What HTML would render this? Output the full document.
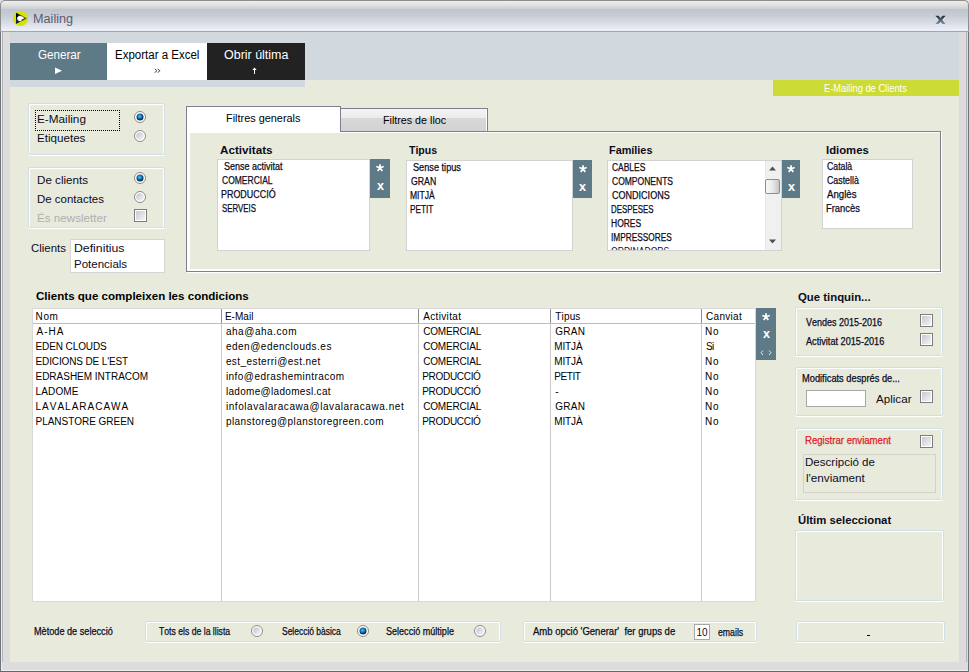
<!DOCTYPE html>
<html><head><meta charset="utf-8"><style>
html,body{margin:0;padding:0;}
body{width:969px;height:672px;overflow:hidden;position:relative;font-family:"Liberation Sans",sans-serif;background:#dcdcdc;font-kerning:none;}
.a{position:absolute;}
.t{white-space:pre;}
</style></head><body>
<div class="a" style="left:0px;top:0px;width:969px;height:672px;background:#dfe3ea;"></div>
<div class="a" style="left:0px;top:20px;width:969px;height:652px;background:#dcdcdc;"></div>
<div class="a" style="left:0px;top:0px;width:969px;height:32px;background:linear-gradient(#eeeeee 0px,#e4e4e4 3px,#d0d1d3 7.5px,#bdc5cd 8px,#c6ccd4 14px,#d9dde5 22px,#eceff7 29px);border:1px solid #8e8e8e;border-bottom:none;border-radius:5px 5px 0 0;box-sizing:border-box;"></div>
<div class="a" style="left:0px;top:31px;width:969px;height:1px;background:#a4a6aa;"></div>
<div class="a" style="left:0px;top:32px;width:1px;height:640px;background:#6e747c;"></div>
<div class="a" style="left:968px;top:32px;width:1px;height:640px;background:#6e747c;"></div>
<div class="a" style="left:0px;top:671px;width:969px;height:1px;background:#60666e;"></div>
<div class="a" style="left:1px;top:32px;width:1px;height:639px;background:#eeeeee;"></div>
<div class="a" style="left:2px;top:32px;width:1px;height:630px;background:#b4b4b4;"></div>
<div class="a" style="left:966px;top:32px;width:1px;height:630px;background:#b4b4b4;"></div>
<div class="a" style="left:1px;top:670px;width:967px;height:1px;background:#f0f0f0;"></div>
<div class="a" style="left:10px;top:32px;width:949px;height:630px;background:#e8eadc;"></div>
<div class="a" style="left:10px;top:32px;width:949px;height:48px;background:#d1d9df;"></div>
<div class="a" style="left:10px;top:80px;width:295px;height:7px;background:#d1d9df;"></div>
<div class="a" style="left:10px;top:43px;width:97px;height:37px;background:#5f7a87;"></div>
<div class="a" style="left:107px;top:43px;width:100px;height:37px;background:#ffffff;"></div>
<div class="a" style="left:207px;top:43px;width:98px;height:37px;background:#222222;"></div>
<div class="a t" style="left:37.70px;top:49px;font-size:12px;line-height:12px;color:#ffffff;transform:scaleX(0.9705);transform-origin:0 0;">Generar</div>
<div class="a t" style="left:114.74px;top:49px;font-size:12px;line-height:12px;color:#000;transform:scaleX(0.9586);transform-origin:0 0;">Exportar a Excel</div>
<div class="a t" style="left:223.60px;top:49px;font-size:12px;line-height:12px;color:#ffffff;transform:scaleX(1.0387);transform-origin:0 0;">Obrir última</div>
<svg class="a" style="left:55px;top:67px" width="8" height="8"><path d="M0 0.5 L7 3.8 L0 7 Z" fill="#fff"/></svg>
<svg class="a" style="left:154px;top:68px" width="7" height="6"><path d="M0.8 0.8 L2.8 2.7 L0.8 4.7 M3.8 0.8 L5.8 2.7 L3.8 4.7" stroke="#201030" stroke-width="0.9" fill="none"/></svg>
<svg class="a" style="left:252px;top:67px" width="5" height="7"><path d="M2.5 0.5 L0.3 3 L4.7 3 Z M2 3 L3 3 L3 7 L2 7 Z" fill="#fff"/></svg>
<div class="a" style="left:773px;top:80px;width:186px;height:16px;background:#cddb36;"></div>
<div class="a t" style="left:824.27px;top:84px;font-size:10px;line-height:10px;color:#ffffff;transform:scaleX(0.9318);transform-origin:0 0;">E-Mailing de Clients</div>
<svg class="a" style="left:12px;top:10px" width="18" height="18" viewBox="0 0 18 18"><defs><linearGradient id="tg" x1="0" y1="0" x2="1" y2="0"><stop offset="0.55" stop-color="#000" stop-opacity="1"/><stop offset="0.75" stop-color="#283048" stop-opacity="0.8"/><stop offset="1" stop-color="#2a60b0" stop-opacity="0.6"/></linearGradient></defs><circle cx="8.5" cy="8.5" r="7.6" fill="#d6e200"/><path d="M4 2.7 L15.2 8.6 L4 13.8 Z" fill="url(#tg)"/><path d="M4 9 L10 9 L4 13.8 Z" fill="#0b2452"/><path d="M5.2 7 L6.2 7 L6.2 5.8 L8.8 5.8 L8.8 6.6 L10.2 5.9 L11 7.2 L11.8 7.6 L11.8 9 L9.6 9.6 L9.6 11.2 L6.4 11.2 L6.4 10 L5.2 9.8 Z" fill="#fff"/></svg>
<div class="a t" style="left:32.95px;top:13px;font-size:12px;line-height:12px;color:#5c5a70;transform:scaleX(1.0541);transform-origin:0 0;">Mailing</div>
<svg class="a" style="left:935px;top:15px" width="12" height="12"><defs><linearGradient id="xg" x1="0" y1="0" x2="0" y2="1"><stop offset="0" stop-color="#2c3036"/><stop offset="0.45" stop-color="#4a5a6c"/><stop offset="1" stop-color="#7f98b2"/></linearGradient></defs><path d="M0.3 1.8 L3.6 1.8 L10.8 10.3 L7.4 10.3 Z M7.4 1.8 L10.8 1.8 L3.6 10.3 L0.3 10.3 Z" fill="#fff" opacity="0.9"/><path d="M0.3 0.8 L3.6 0.8 L10.8 9.3 L7.4 9.3 Z M7.4 0.8 L10.8 0.8 L3.6 9.3 L0.3 9.3 Z" fill="url(#xg)"/></svg>
<div class="a" style="left:28px;top:103px;width:137px;height:52px;border:1px solid #d3dde5;box-shadow:inset 1px 1px 0 #fff,inset -1px 0 0 #fff,0 1px 0 #fff;border-radius:2px;box-sizing:border-box;"></div>
<div class="a" style="left:35px;top:110px;width:85px;height:21px;border:1px dotted #000;box-sizing:border-box;"></div>
<div class="a t" style="left:36.83px;top:114px;font-size:11px;line-height:11px;color:#0c0c1e;transform:scaleX(1.0667);transform-origin:0 0;">E-Mailing</div>
<div class="a t" style="left:36.84px;top:133px;font-size:11px;line-height:11px;color:#0c0c1e;transform:scaleX(1.0556);transform-origin:0 0;">Etiquetes</div>
<svg class="a" style="left:134px;top:111px" width="12" height="12"><defs><radialGradient id="rg1" cx="45%" cy="40%" r="60%"><stop offset="0" stop-color="#40c8ff"/><stop offset="0.4" stop-color="#1a88cc"/><stop offset="0.8" stop-color="#0a3458"/><stop offset="1" stop-color="#0a2a48"/></radialGradient></defs><circle cx="6" cy="6" r="5.5" fill="#fff" stroke="#8a8a8a" stroke-width="1"/><circle cx="6" cy="6" r="3.5" fill="url(#rg1)"/></svg>
<svg class="a" style="left:134px;top:130px" width="12" height="12"><defs><linearGradient id="ug2" x1="0" y1="0" x2="1" y2="1"><stop offset="0" stop-color="#bfc4cc"/><stop offset="1" stop-color="#f8f8f8"/></linearGradient></defs><circle cx="6" cy="6" r="5.5" fill="#fff" stroke="#8a8a8a" stroke-width="1"/><circle cx="6" cy="6" r="3.8" fill="url(#ug2)"/></svg>
<div class="a" style="left:28px;top:167px;width:137px;height:61px;border:1px solid #d3dde5;box-shadow:inset 1px 1px 0 #fff,inset -1px 0 0 #fff,0 1px 0 #fff;border-radius:2px;box-sizing:border-box;"></div>
<div class="a t" style="left:36.74px;top:175px;font-size:11px;line-height:11px;color:#0c0c1e;transform:scaleX(1.0574);transform-origin:0 0;">De clients</div>
<div class="a t" style="left:36.76px;top:194px;font-size:11px;line-height:11px;color:#0c0c1e;transform:scaleX(1.0429);transform-origin:0 0;">De contactes</div>
<div class="a t" style="left:36.74px;top:213px;font-size:11px;line-height:11px;color:#b0b0b0;transform:scaleX(1.0585);transform-origin:0 0;">És newsletter</div>
<svg class="a" style="left:134px;top:172px" width="12" height="12"><defs><radialGradient id="rg3" cx="45%" cy="40%" r="60%"><stop offset="0" stop-color="#40c8ff"/><stop offset="0.4" stop-color="#1a88cc"/><stop offset="0.8" stop-color="#0a3458"/><stop offset="1" stop-color="#0a2a48"/></radialGradient></defs><circle cx="6" cy="6" r="5.5" fill="#fff" stroke="#8a8a8a" stroke-width="1"/><circle cx="6" cy="6" r="3.5" fill="url(#rg3)"/></svg>
<svg class="a" style="left:134px;top:191px" width="12" height="12"><defs><linearGradient id="ug4" x1="0" y1="0" x2="1" y2="1"><stop offset="0" stop-color="#bfc4cc"/><stop offset="1" stop-color="#f8f8f8"/></linearGradient></defs><circle cx="6" cy="6" r="5.5" fill="#fff" stroke="#8a8a8a" stroke-width="1"/><circle cx="6" cy="6" r="3.8" fill="url(#ug4)"/></svg>
<div class="a" style="left:134px;top:209px;width:13px;height:13px;border:1px solid #7c7c7c;box-sizing:border-box;background:#fff;"></div>
<div class="a" style="left:136px;top:211px;width:9px;height:9px;background:linear-gradient(135deg,#c6cad2,#f4f4f4);"></div>
<div class="a t" style="left:30.90px;top:243px;font-size:11px;line-height:11px;color:#0c0c1e;transform:scaleX(1.0364);transform-origin:0 0;">Clients</div>
<div class="a" style="left:70px;top:239px;width:95px;height:34px;background:#fff;border:1px solid #d6d6d6;box-sizing:border-box;"></div>
<div class="a t" style="left:73.88px;top:243px;font-size:11px;line-height:11px;color:#0c0c1e;transform:scaleX(1.1159);transform-origin:0 0;">Definitius</div>
<div class="a t" style="left:73.95px;top:259px;font-size:11px;line-height:11px;color:#0c0c1e;transform:scaleX(1.046);transform-origin:0 0;">Potencials</div>
<div class="a" style="left:186px;top:131px;width:755px;height:141px;border:1px solid #7c7f8c;background:#fff;box-sizing:border-box;box-shadow:1px 1px 0 #fff;"></div>
<div class="a" style="left:190px;top:133px;width:750px;height:136px;background:#e8eadc;"></div>
<div class="a" style="left:186px;top:106px;width:155px;height:26px;border:1px solid #7c7f8c;border-bottom:none;background:#fff;box-sizing:border-box;"></div>
<div class="a t" style="left:225.71px;top:113px;font-size:11px;line-height:11px;color:#000;transform:scaleX(0.9905);transform-origin:0 0;">Filtres generals</div>
<div class="a" style="left:340px;top:108px;width:148px;height:24px;border:1px solid #7c7f8c;box-sizing:border-box;background:linear-gradient(#f4f4f4,#ececec 41%,#d9d9d9 42%,#d2d2d2);box-shadow:inset -1px 0 0 #fff;"></div>
<div class="a t" style="left:383.23px;top:115px;font-size:11px;line-height:11px;color:#000;transform:scaleX(0.9734);transform-origin:0 0;">Filtres de lloc</div>
<div class="a t" style="left:219.80px;top:145px;font-size:11px;line-height:11px;color:#0c0c1e;font-weight:bold;transform:scaleX(1.062);transform-origin:0 0;">Activitats</div>
<div class="a" style="left:217px;top:159px;width:153px;height:92px;background:#fff;border:1px solid #d2d2d2;box-sizing:border-box;"></div>
<div class="a t" style="left:224.10px;top:162px;font-size:10px;line-height:10px;color:#0c0c1e;transform:scaleX(0.9);transform-origin:0 0;-webkit-text-stroke:0.25px currentColor;">Sense activitat</div>
<div class="a t" style="left:221.90px;top:176px;font-size:10px;line-height:10px;color:#0c0c1e;transform:scaleX(0.85);transform-origin:0 0;-webkit-text-stroke:0.25px currentColor;">COMERCIAL</div>
<div class="a t" style="left:221.01px;top:190px;font-size:10px;line-height:10px;color:#0c0c1e;transform:scaleX(0.8933);transform-origin:0 0;-webkit-text-stroke:0.25px currentColor;">PRODUCCIÓ</div>
<div class="a t" style="left:221.90px;top:204px;font-size:10px;line-height:10px;color:#0c0c1e;transform:scaleX(0.7814);transform-origin:0 0;-webkit-text-stroke:0.25px currentColor;">SERVEIS</div>
<div class="a" style="left:370px;top:159px;width:20px;height:39px;background:#5f7a87;"></div>
<svg class="a" style="left:375.0px;top:162.9px" width="10" height="9"><path d="M5 4.7 L5 1.3 M5 4.7 L8.7 3.5 M5 4.7 L1.3 3.5 M5 4.7 L7.3 7.9 M5 4.7 L2.7 7.9" stroke="#fff" stroke-width="1.7"/></svg>
<div class="a t" style="left:376.80px;top:180px;font-size:12px;line-height:12px;color:#fff;font-weight:bold;transform:scaleX(1.0571);transform-origin:0 0;">x</div>
<div class="a t" style="left:408.90px;top:145px;font-size:11px;line-height:11px;color:#0c0c1e;font-weight:bold;transform:scaleX(0.9586);transform-origin:0 0;">Tipus</div>
<div class="a" style="left:406px;top:160px;width:167px;height:91px;background:#fff;border:1px solid #d2d2d2;box-sizing:border-box;"></div>
<div class="a t" style="left:412.80px;top:163px;font-size:10px;line-height:10px;color:#0c0c1e;transform:scaleX(0.9173);transform-origin:0 0;-webkit-text-stroke:0.25px currentColor;">Sense tipus</div>
<div class="a t" style="left:410.70px;top:177px;font-size:10px;line-height:10px;color:#0c0c1e;transform:scaleX(0.8724);transform-origin:0 0;-webkit-text-stroke:0.25px currentColor;">GRAN</div>
<div class="a t" style="left:409.85px;top:191px;font-size:10px;line-height:10px;color:#0c0c1e;transform:scaleX(0.85);transform-origin:0 0;-webkit-text-stroke:0.25px currentColor;">MITJÀ</div>
<div class="a t" style="left:409.87px;top:205px;font-size:10px;line-height:10px;color:#0c0c1e;transform:scaleX(0.8259);transform-origin:0 0;-webkit-text-stroke:0.25px currentColor;">PETIT</div>
<div class="a" style="left:573px;top:160px;width:19px;height:38px;background:#5f7a87;"></div>
<svg class="a" style="left:577.5px;top:163.9px" width="10" height="9"><path d="M5 4.7 L5 1.3 M5 4.7 L8.7 3.5 M5 4.7 L1.3 3.5 M5 4.7 L7.3 7.9 M5 4.7 L2.7 7.9" stroke="#fff" stroke-width="1.7"/></svg>
<div class="a t" style="left:579.30px;top:181px;font-size:12px;line-height:12px;color:#fff;font-weight:bold;transform:scaleX(1.0571);transform-origin:0 0;">x</div>
<div class="a t" style="left:608.90px;top:145px;font-size:11px;line-height:11px;color:#0c0c1e;font-weight:bold;transform:scaleX(0.9864);transform-origin:0 0;">Famílies</div>
<div class="a" style="left:607px;top:160px;width:175px;height:91px;background:#fff;border:1px solid #d2d2d2;box-sizing:border-box;"></div>
<div class="a t" style="left:611.80px;top:163px;font-size:10px;line-height:10px;color:#0c0c1e;transform:scaleX(0.8436);transform-origin:0 0;-webkit-text-stroke:0.25px currentColor;">CABLES</div>
<div class="a t" style="left:611.80px;top:177px;font-size:10px;line-height:10px;color:#0c0c1e;transform:scaleX(0.8514);transform-origin:0 0;-webkit-text-stroke:0.25px currentColor;">COMPONENTS</div>
<div class="a t" style="left:611.80px;top:191px;font-size:10px;line-height:10px;color:#0c0c1e;transform:scaleX(0.9031);transform-origin:0 0;-webkit-text-stroke:0.25px currentColor;">CONDICIONS</div>
<div class="a t" style="left:611.01px;top:205px;font-size:10px;line-height:10px;color:#0c0c1e;transform:scaleX(0.7887);transform-origin:0 0;-webkit-text-stroke:0.25px currentColor;">DESPESES</div>
<div class="a t" style="left:610.95px;top:219px;font-size:10px;line-height:10px;color:#0c0c1e;transform:scaleX(0.8486);transform-origin:0 0;-webkit-text-stroke:0.25px currentColor;">HORES</div>
<div class="a t" style="left:610.97px;top:233px;font-size:10px;line-height:10px;color:#0c0c1e;transform:scaleX(0.8278);transform-origin:0 0;-webkit-text-stroke:0.25px currentColor;">IMPRESSORES</div>
<div class="a" style="left:608px;top:246px;width:157px;height:4px;overflow:hidden"><div class="a t" style="left:3px;top:0.8px;font-size:10px;line-height:10px;color:#0c0c1e;transform:scaleX(0.86);transform-origin:0 0">ORDINADORS</div></div>
<div class="a" style="left:765px;top:161px;width:16px;height:89px;background:#f0f0f0;border-left:1px solid #e8e8e8;box-sizing:border-box;"></div>
<svg class="a" style="left:769px;top:166px" width="8" height="5"><path d="M0 4.5 L3.5 0.5 L7 4.5 Z" fill="#505050"/></svg>
<svg class="a" style="left:769px;top:239px" width="8" height="5"><path d="M0 0.5 L3.5 4.5 L7 0.5 Z" fill="#505050"/></svg>
<div class="a" style="left:765px;top:179px;width:15px;height:15px;border:1px solid #8e8e8e;border-radius:2px;box-sizing:border-box;background:linear-gradient(90deg,#f8f8f8,#ececec 45%,#c6c6c6);"></div>
<div class="a" style="left:782px;top:160px;width:18px;height:38px;background:#5f7a87;"></div>
<svg class="a" style="left:786.0px;top:163.9px" width="10" height="9"><path d="M5 4.7 L5 1.3 M5 4.7 L8.7 3.5 M5 4.7 L1.3 3.5 M5 4.7 L7.3 7.9 M5 4.7 L2.7 7.9" stroke="#fff" stroke-width="1.7"/></svg>
<div class="a t" style="left:787.80px;top:181px;font-size:12px;line-height:12px;color:#fff;font-weight:bold;transform:scaleX(1.0571);transform-origin:0 0;">x</div>
<div class="a t" style="left:825.60px;top:145px;font-size:11px;line-height:11px;color:#0c0c1e;font-weight:bold;transform:scaleX(1.0286);transform-origin:0 0;">Idiomes</div>
<div class="a" style="left:822px;top:159px;width:91px;height:70px;background:#fff;border:1px solid #d2d2d2;box-sizing:border-box;"></div>
<div class="a t" style="left:826.90px;top:162px;font-size:10px;line-height:10px;color:#0c0c1e;transform:scaleX(0.8724);transform-origin:0 0;-webkit-text-stroke:0.25px currentColor;">Català</div>
<div class="a t" style="left:826.90px;top:176px;font-size:10px;line-height:10px;color:#0c0c1e;transform:scaleX(0.8806);transform-origin:0 0;-webkit-text-stroke:0.25px currentColor;">Castellà</div>
<div class="a t" style="left:826.90px;top:190px;font-size:10px;line-height:10px;color:#0c0c1e;transform:scaleX(0.9633);transform-origin:0 0;-webkit-text-stroke:0.25px currentColor;">Anglès</div>
<div class="a t" style="left:825.96px;top:204px;font-size:10px;line-height:10px;color:#0c0c1e;transform:scaleX(0.9371);transform-origin:0 0;-webkit-text-stroke:0.25px currentColor;">Francès</div>
<div class="a t" style="left:35.50px;top:291px;font-size:11px;line-height:11px;color:#000;font-weight:bold;transform:scaleX(1.0515);transform-origin:0 0;">Clients que compleixen les condicions</div>
<div class="a" style="left:32px;top:308px;width:724px;height:294px;background:#fff;border:1px solid #d8d8d8;box-sizing:border-box;"></div>
<div class="a" style="left:33px;top:323px;width:722px;height:1px;background:#bcbcbc;"></div>
<div class="a" style="left:221px;top:309px;width:1px;height:292px;background:#c8c8c8;"></div>
<div class="a" style="left:221px;top:309px;width:1px;height:14px;background:#8e8e8e;"></div>
<div class="a" style="left:418px;top:309px;width:1px;height:292px;background:#c8c8c8;"></div>
<div class="a" style="left:418px;top:309px;width:1px;height:14px;background:#8e8e8e;"></div>
<div class="a" style="left:550px;top:309px;width:1px;height:292px;background:#c8c8c8;"></div>
<div class="a" style="left:550px;top:309px;width:1px;height:14px;background:#8e8e8e;"></div>
<div class="a" style="left:701px;top:309px;width:1px;height:292px;background:#c8c8c8;"></div>
<div class="a" style="left:701px;top:309px;width:1px;height:14px;background:#8e8e8e;"></div>
<div class="a t" style="left:35.60px;top:312px;font-size:10px;line-height:10px;color:#000;letter-spacing:0.6px;">Nom</div>
<div class="a t" style="left:224.90px;top:312px;font-size:10px;line-height:10px;color:#000;letter-spacing:0.04px;">E-Mail</div>
<div class="a t" style="left:423.20px;top:312px;font-size:10px;line-height:10px;color:#000;letter-spacing:0.35px;">Activitat</div>
<div class="a t" style="left:555.30px;top:312px;font-size:10px;line-height:10px;color:#000;letter-spacing:0.15px;">Tipus</div>
<div class="a t" style="left:706.00px;top:312px;font-size:10px;line-height:10px;color:#000;letter-spacing:0.3px;">Canviat</div>
<div class="a t" style="left:36.50px;top:327px;font-size:10px;line-height:10px;color:#000;letter-spacing:1.0px;">A-HA</div>
<div class="a t" style="left:225.90px;top:327px;font-size:10px;line-height:10px;color:#000;letter-spacing:0.54px;">aha@aha.com</div>
<div class="a t" style="left:423.20px;top:327px;font-size:10px;line-height:10px;color:#000;letter-spacing:-0.175px;">COMERCIAL</div>
<div class="a t" style="left:555.30px;top:327px;font-size:10px;line-height:10px;color:#000;letter-spacing:0.267px;">GRAN</div>
<div class="a t" style="left:705.00px;top:327px;font-size:10px;line-height:10px;color:#000;letter-spacing:0.8px;">No</div>
<div class="a t" style="left:35.50px;top:342px;font-size:10px;line-height:10px;color:#000;letter-spacing:-0.1px;">EDEN CLOUDS</div>
<div class="a t" style="left:225.90px;top:342px;font-size:10px;line-height:10px;color:#000;letter-spacing:0.506px;">eden@edenclouds.es</div>
<div class="a t" style="left:423.20px;top:342px;font-size:10px;line-height:10px;color:#000;letter-spacing:-0.175px;">COMERCIAL</div>
<div class="a t" style="left:554.30px;top:342px;font-size:10px;line-height:10px;color:#000;letter-spacing:-0.15px;">MITJÀ</div>
<div class="a t" style="left:706.00px;top:342px;font-size:10px;line-height:10px;color:#000;letter-spacing:-0.6px;">Si</div>
<div class="a t" style="left:35.50px;top:357px;font-size:10px;line-height:10px;color:#000;letter-spacing:-0.125px;">EDICIONS DE L&#x27;EST</div>
<div class="a t" style="left:225.90px;top:357px;font-size:10px;line-height:10px;color:#000;letter-spacing:0.422px;">est_esterri@est.net</div>
<div class="a t" style="left:423.20px;top:357px;font-size:10px;line-height:10px;color:#000;letter-spacing:-0.175px;">COMERCIAL</div>
<div class="a t" style="left:554.30px;top:357px;font-size:10px;line-height:10px;color:#000;letter-spacing:-0.15px;">MITJÀ</div>
<div class="a t" style="left:705.00px;top:357px;font-size:10px;line-height:10px;color:#000;letter-spacing:0.8px;">No</div>
<div class="a t" style="left:35.50px;top:372px;font-size:10px;line-height:10px;color:#000;letter-spacing:-0.012px;">EDRASHEM INTRACOM</div>
<div class="a t" style="left:225.90px;top:372px;font-size:10px;line-height:10px;color:#000;letter-spacing:0.46px;">info@edrashemintracom</div>
<div class="a t" style="left:422.20px;top:372px;font-size:10px;line-height:10px;color:#000;letter-spacing:-0.3px;">PRODUCCIÓ</div>
<div class="a t" style="left:554.30px;top:372px;font-size:10px;line-height:10px;color:#000;letter-spacing:-0.45px;">PETIT</div>
<div class="a t" style="left:705.00px;top:372px;font-size:10px;line-height:10px;color:#000;letter-spacing:0.8px;">No</div>
<div class="a t" style="left:35.50px;top:387px;font-size:10px;line-height:10px;color:#000;letter-spacing:0.16px;">LADOME</div>
<div class="a t" style="left:225.90px;top:387px;font-size:10px;line-height:10px;color:#000;letter-spacing:0.311px;">ladome@ladomesl.cat</div>
<div class="a t" style="left:422.20px;top:387px;font-size:10px;line-height:10px;color:#000;letter-spacing:-0.3px;">PRODUCCIÓ</div>
<div class="a t" style="left:555.30px;top:387px;font-size:10px;line-height:10px;color:#000;">-</div>
<div class="a t" style="left:705.00px;top:387px;font-size:10px;line-height:10px;color:#000;letter-spacing:0.8px;">No</div>
<div class="a t" style="left:35.50px;top:402px;font-size:10px;line-height:10px;color:#000;letter-spacing:1.0px;">LAVALARACAWA</div>
<div class="a t" style="left:225.90px;top:402px;font-size:10px;line-height:10px;color:#000;letter-spacing:0.568px;">infolavalaracawa@lavalaracawa.net</div>
<div class="a t" style="left:423.20px;top:402px;font-size:10px;line-height:10px;color:#000;letter-spacing:-0.175px;">COMERCIAL</div>
<div class="a t" style="left:555.30px;top:402px;font-size:10px;line-height:10px;color:#000;letter-spacing:0.267px;">GRAN</div>
<div class="a t" style="left:705.00px;top:402px;font-size:10px;line-height:10px;color:#000;letter-spacing:0.8px;">No</div>
<div class="a t" style="left:35.50px;top:417px;font-size:10px;line-height:10px;color:#000;letter-spacing:-0.029px;">PLANSTORE GREEN</div>
<div class="a t" style="left:225.90px;top:417px;font-size:10px;line-height:10px;color:#000;letter-spacing:0.443px;">planstoreg@planstoregreen.com</div>
<div class="a t" style="left:422.20px;top:417px;font-size:10px;line-height:10px;color:#000;letter-spacing:-0.3px;">PRODUCCIÓ</div>
<div class="a t" style="left:554.30px;top:417px;font-size:10px;line-height:10px;color:#000;letter-spacing:-0.15px;">MITJÀ</div>
<div class="a t" style="left:705.00px;top:417px;font-size:10px;line-height:10px;color:#000;letter-spacing:0.8px;">No</div>
<div class="a" style="left:756px;top:308px;width:20px;height:52px;background:#5f7a87;"></div>
<svg class="a" style="left:761px;top:311.5px" width="10" height="9"><path d="M5 4.7 L5 1.3 M5 4.7 L8.7 3.5 M5 4.7 L1.3 3.5 M5 4.7 L7.3 7.9 M5 4.7 L2.7 7.9" stroke="#fff" stroke-width="1.7"/></svg>
<div class="a t" style="left:762.80px;top:328px;font-size:12px;line-height:12px;color:#fff;font-weight:bold;transform:scaleX(1.0571);transform-origin:0 0;">x</div>
<svg class="a" style="left:760px;top:350px" width="12" height="6"><path d="M3 0.5 L1 2.8 L3 5 M9 0.5 L11 2.8 L9 5" stroke="#dfe6ea" stroke-width="1" fill="none"/></svg>
<div class="a t" style="left:797.80px;top:292px;font-size:11px;line-height:11px;color:#0c0c1e;font-weight:bold;transform:scaleX(1.0329);transform-origin:0 0;">Que tinquin...</div>
<div class="a" style="left:795px;top:307px;width:148px;height:49px;border:1px solid #d3dde5;box-shadow:inset 1px 1px 0 #fff,inset -1px 0 0 #fff,0 1px 0 #fff;border-radius:2px;box-sizing:border-box;"></div>
<div class="a t" style="left:805.50px;top:318px;font-size:10px;line-height:10px;color:#0c0c1e;transform:scaleX(0.9);transform-origin:0 0;-webkit-text-stroke:0.25px currentColor;">Vendes 2015-2016</div>
<div class="a t" style="left:805.50px;top:337px;font-size:10px;line-height:10px;color:#0c0c1e;transform:scaleX(0.9141);transform-origin:0 0;-webkit-text-stroke:0.25px currentColor;">Activitat 2015-2016</div>
<div class="a" style="left:920px;top:314px;width:13px;height:13px;border:1px solid #7c7c7c;box-sizing:border-box;background:#fff;"></div>
<div class="a" style="left:922px;top:316px;width:9px;height:9px;background:linear-gradient(135deg,#c6cad2,#f4f4f4);"></div>
<div class="a" style="left:920px;top:333px;width:13px;height:13px;border:1px solid #7c7c7c;box-sizing:border-box;background:#fff;"></div>
<div class="a" style="left:922px;top:335px;width:9px;height:9px;background:linear-gradient(135deg,#c6cad2,#f4f4f4);"></div>
<div class="a" style="left:795px;top:367px;width:148px;height:49px;border:1px solid #d3dde5;box-shadow:inset 1px 1px 0 #fff,inset -1px 0 0 #fff,0 1px 0 #fff;border-radius:2px;box-sizing:border-box;"></div>
<div class="a t" style="left:801.87px;top:374px;font-size:10px;line-height:10px;color:#0c0c1e;transform:scaleX(0.9274);transform-origin:0 0;-webkit-text-stroke:0.25px currentColor;">Modificats després de...</div>
<div class="a" style="left:806px;top:390px;width:60px;height:17px;background:#fff;border:1px solid #a8a8a8;box-sizing:border-box;"></div>
<div class="a t" style="left:876.30px;top:394px;font-size:11px;line-height:11px;color:#0c0c1e;transform:scaleX(1.0559);transform-origin:0 0;">Aplicar</div>
<div class="a" style="left:920px;top:390px;width:13px;height:13px;border:1px solid #7c7c7c;box-sizing:border-box;background:#fff;"></div>
<div class="a" style="left:922px;top:392px;width:9px;height:9px;background:linear-gradient(135deg,#c6cad2,#f4f4f4);"></div>
<div class="a" style="left:795px;top:428px;width:148px;height:72px;border:1px solid #d3dde5;box-shadow:inset 1px 1px 0 #fff,inset -1px 0 0 #fff,0 1px 0 #fff;border-radius:2px;box-sizing:border-box;"></div>
<div class="a t" style="left:804.94px;top:436px;font-size:10px;line-height:10px;color:#e0202a;transform:scaleX(0.9607);transform-origin:0 0;-webkit-text-stroke:0.25px currentColor;">Registrar enviament</div>
<div class="a" style="left:920px;top:435px;width:13px;height:13px;border:1px solid #7c7c7c;box-sizing:border-box;background:#fff;"></div>
<div class="a" style="left:922px;top:437px;width:9px;height:9px;background:linear-gradient(135deg,#c6cad2,#f4f4f4);"></div>
<div class="a" style="left:803px;top:454px;width:133px;height:39px;border:1px solid #d2d2ca;box-sizing:border-box;"></div>
<div class="a t" style="left:804.85px;top:457px;font-size:11px;line-height:11px;color:#0c0c1e;transform:scaleX(1.05);transform-origin:0 0;">Descripció de</div>
<div class="a t" style="left:805.90px;top:473px;font-size:11px;line-height:11px;color:#0c0c1e;transform:scaleX(1.0643);transform-origin:0 0;">l&#x27;enviament</div>
<div class="a t" style="left:797.50px;top:515px;font-size:11px;line-height:11px;color:#0c0c1e;font-weight:bold;transform:scaleX(1.0297);transform-origin:0 0;">Últim seleccionat</div>
<div class="a" style="left:795px;top:530px;width:149px;height:71px;border:1px solid #d3dde5;box-shadow:inset 1px 1px 0 #fff,inset -1px 0 0 #fff,0 1px 0 #fff;border-radius:2px;box-sizing:border-box;"></div>
<div class="a" style="left:796px;top:621px;width:149px;height:21px;border:1px solid #d3dde5;box-shadow:inset 1px 1px 0 #fff,inset -1px 0 0 #fff,0 1px 0 #fff;border-radius:2px;box-sizing:border-box;"></div>
<div class="a" style="left:867px;top:635px;width:3px;height:1px;background:#000;"></div>
<div class="a t" style="left:33.99px;top:627px;font-size:10px;line-height:10px;color:#0c0c1e;transform:scaleX(0.9141);transform-origin:0 0;-webkit-text-stroke:0.25px currentColor;">Mètode de selecció</div>
<div class="a" style="left:145px;top:621px;width:356px;height:21px;border:1px solid #d3dde5;box-shadow:inset 1px 1px 0 #fff,inset -1px 0 0 #fff,0 1px 0 #fff;border-radius:2px;box-sizing:border-box;"></div>
<div class="a t" style="left:158.70px;top:627px;font-size:10px;line-height:10px;color:#0c0c1e;transform:scaleX(0.8651);transform-origin:0 0;-webkit-text-stroke:0.25px currentColor;">Tots els de la llista</div>
<svg class="a" style="left:251px;top:625px" width="12" height="12"><defs><linearGradient id="ug5" x1="0" y1="0" x2="1" y2="1"><stop offset="0" stop-color="#bfc4cc"/><stop offset="1" stop-color="#f8f8f8"/></linearGradient></defs><circle cx="6" cy="6" r="5.5" fill="#fff" stroke="#8a8a8a" stroke-width="1"/><circle cx="6" cy="6" r="3.8" fill="url(#ug5)"/></svg>
<div class="a t" style="left:281.80px;top:627px;font-size:10px;line-height:10px;color:#0c0c1e;transform:scaleX(0.8457);transform-origin:0 0;-webkit-text-stroke:0.25px currentColor;">Selecció bàsica</div>
<svg class="a" style="left:357px;top:625px" width="12" height="12"><defs><radialGradient id="rg6" cx="45%" cy="40%" r="60%"><stop offset="0" stop-color="#40c8ff"/><stop offset="0.4" stop-color="#1a88cc"/><stop offset="0.8" stop-color="#0a3458"/><stop offset="1" stop-color="#0a2a48"/></radialGradient></defs><circle cx="6" cy="6" r="5.5" fill="#fff" stroke="#8a8a8a" stroke-width="1"/><circle cx="6" cy="6" r="3.5" fill="url(#rg6)"/></svg>
<div class="a t" style="left:386.40px;top:627px;font-size:10px;line-height:10px;color:#0c0c1e;transform:scaleX(0.9053);transform-origin:0 0;-webkit-text-stroke:0.25px currentColor;">Selecció múltiple</div>
<svg class="a" style="left:474px;top:625px" width="12" height="12"><defs><linearGradient id="ug7" x1="0" y1="0" x2="1" y2="1"><stop offset="0" stop-color="#bfc4cc"/><stop offset="1" stop-color="#f8f8f8"/></linearGradient></defs><circle cx="6" cy="6" r="5.5" fill="#fff" stroke="#8a8a8a" stroke-width="1"/><circle cx="6" cy="6" r="3.8" fill="url(#ug7)"/></svg>
<div class="a" style="left:523px;top:621px;width:234px;height:21px;border:1px solid #d3dde5;box-shadow:inset 1px 1px 0 #fff,inset -1px 0 0 #fff,0 1px 0 #fff;border-radius:2px;box-sizing:border-box;"></div>
<div class="a t" style="left:532.80px;top:627px;font-size:10px;line-height:10px;color:#0c0c1e;transform:scaleX(0.9513);transform-origin:0 0;-webkit-text-stroke:0.25px currentColor;">Amb opció &#x27;Generar&#x27;  fer grups de</div>
<div class="a" style="left:694px;top:624px;width:16px;height:16px;background:#fff;border:1px solid #a8a8a8;box-sizing:border-box;"></div>
<div class="a t" style="left:696.50px;top:628px;font-size:10px;line-height:10px;color:#0c0c1e;">10</div>
<div class="a t" style="left:718.00px;top:628px;font-size:10px;line-height:10px;color:#0c0c1e;transform:scaleX(0.8724);transform-origin:0 0;-webkit-text-stroke:0.25px currentColor;">emails</div>
</body></html>
